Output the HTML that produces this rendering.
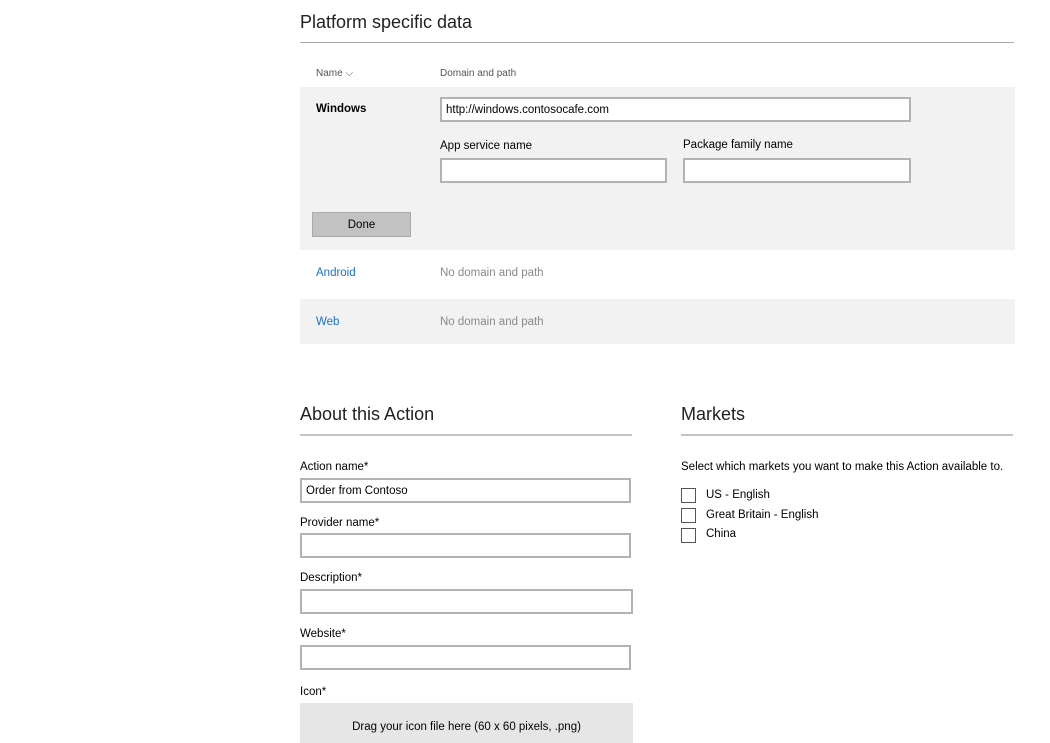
<!DOCTYPE html>
<html><head><meta charset="utf-8"><style>
*{margin:0;padding:0;box-sizing:border-box}
body{width:1050px;height:734px;background:#fff;position:relative;overflow:hidden;font-family:"Liberation Sans",sans-serif;color:#000}
.a{position:absolute;white-space:nowrap}
.h{font-size:18px;font-weight:300;color:#222}
.rule{position:absolute;height:2px;background:#c4c4c4}
.t,.g,.l{margin-top:1px}
.t{font-size:11.5px}
.s{font-size:10px;color:#555;margin-top:1px}
.inp{position:absolute;border:2px solid #b3b3b3;background:#fff;height:25px;font-size:11.5px;padding:5px 4px 0}
.g{color:#8a8a8a;font-size:11.5px}
.l{color:#1a73c8;font-size:11.5px}
.cb{position:absolute;width:15px;height:15px;border:1px solid #555;background:#fff}
</style></head><body>
<div class="a h" style="left:300px;top:12px">Platform specific data</div>
<div class="rule" style="left:300px;top:42px;width:714px;height:1px;background:#aaa"></div>
<div class="a s" style="left:316px;top:67px">Name ⌵</div>
<div class="a s" style="left:440px;top:67px">Domain and path</div>
<div class="a" style="left:300px;top:87px;width:715px;height:163px;background:#f2f2f2"></div>
<div class="a t" style="left:316px;top:102px;font-weight:bold">Windows</div>
<div class="inp" style="left:440px;top:97px;width:471px">http://windows.contosocafe.com</div>
<div class="a t" style="left:440px;top:139px">App service name</div>
<div class="a t" style="left:683px;top:138px">Package family name</div>
<div class="inp" style="left:440px;top:158px;width:227px"></div>
<div class="inp" style="left:683px;top:158px;width:228px"></div>
<div class="a t" style="left:312px;top:211px;width:99px;height:25px;background:#c2c2c2;border:1px solid #aaa;text-align:center;line-height:24px">Done</div>
<div class="a l" style="left:316px;top:266px">Android</div>
<div class="a g" style="left:440px;top:266px">No domain and path</div>
<div class="a" style="left:300px;top:299px;width:715px;height:45px;background:#f2f2f2"></div>
<div class="a l" style="left:316px;top:315px">Web</div>
<div class="a g" style="left:440px;top:315px">No domain and path</div>

<div class="a h" style="left:300px;top:404px">About this Action</div>
<div class="rule" style="left:300px;top:434px;width:332px"></div>
<div class="a h" style="left:681px;top:404px">Markets</div>
<div class="rule" style="left:681px;top:434px;width:332px"></div>

<div class="a t" style="left:300px;top:460px">Action name*</div>
<div class="inp" style="left:300px;top:478px;width:331px">Order from Contoso</div>
<div class="a t" style="left:300px;top:516px">Provider name*</div>
<div class="inp" style="left:300px;top:533px;width:331px"></div>
<div class="a t" style="left:300px;top:571px">Description*</div>
<div class="inp" style="left:300px;top:589px;width:333px"></div>
<div class="a t" style="left:300px;top:627px">Website*</div>
<div class="inp" style="left:300px;top:645px;width:331px"></div>
<div class="a t" style="left:300px;top:685px">Icon*</div>
<div class="a t" style="left:300px;top:702px;width:333px;height:40px;background:#e6e6e6;text-align:center;padding-top:18px">Drag your icon file here (60 x 60 pixels, .png)</div>

<div class="a t" style="left:681px;top:460px">Select which markets you want to make this Action available to.</div>
<div class="cb" style="left:681px;top:488px"></div><div class="a t" style="left:706px;top:488px">US - English</div>
<div class="cb" style="left:681px;top:508px"></div><div class="a t" style="left:706px;top:508px">Great Britain - English</div>
<div class="cb" style="left:681px;top:528px"></div><div class="a t" style="left:706px;top:527px">China</div>
</body></html>
